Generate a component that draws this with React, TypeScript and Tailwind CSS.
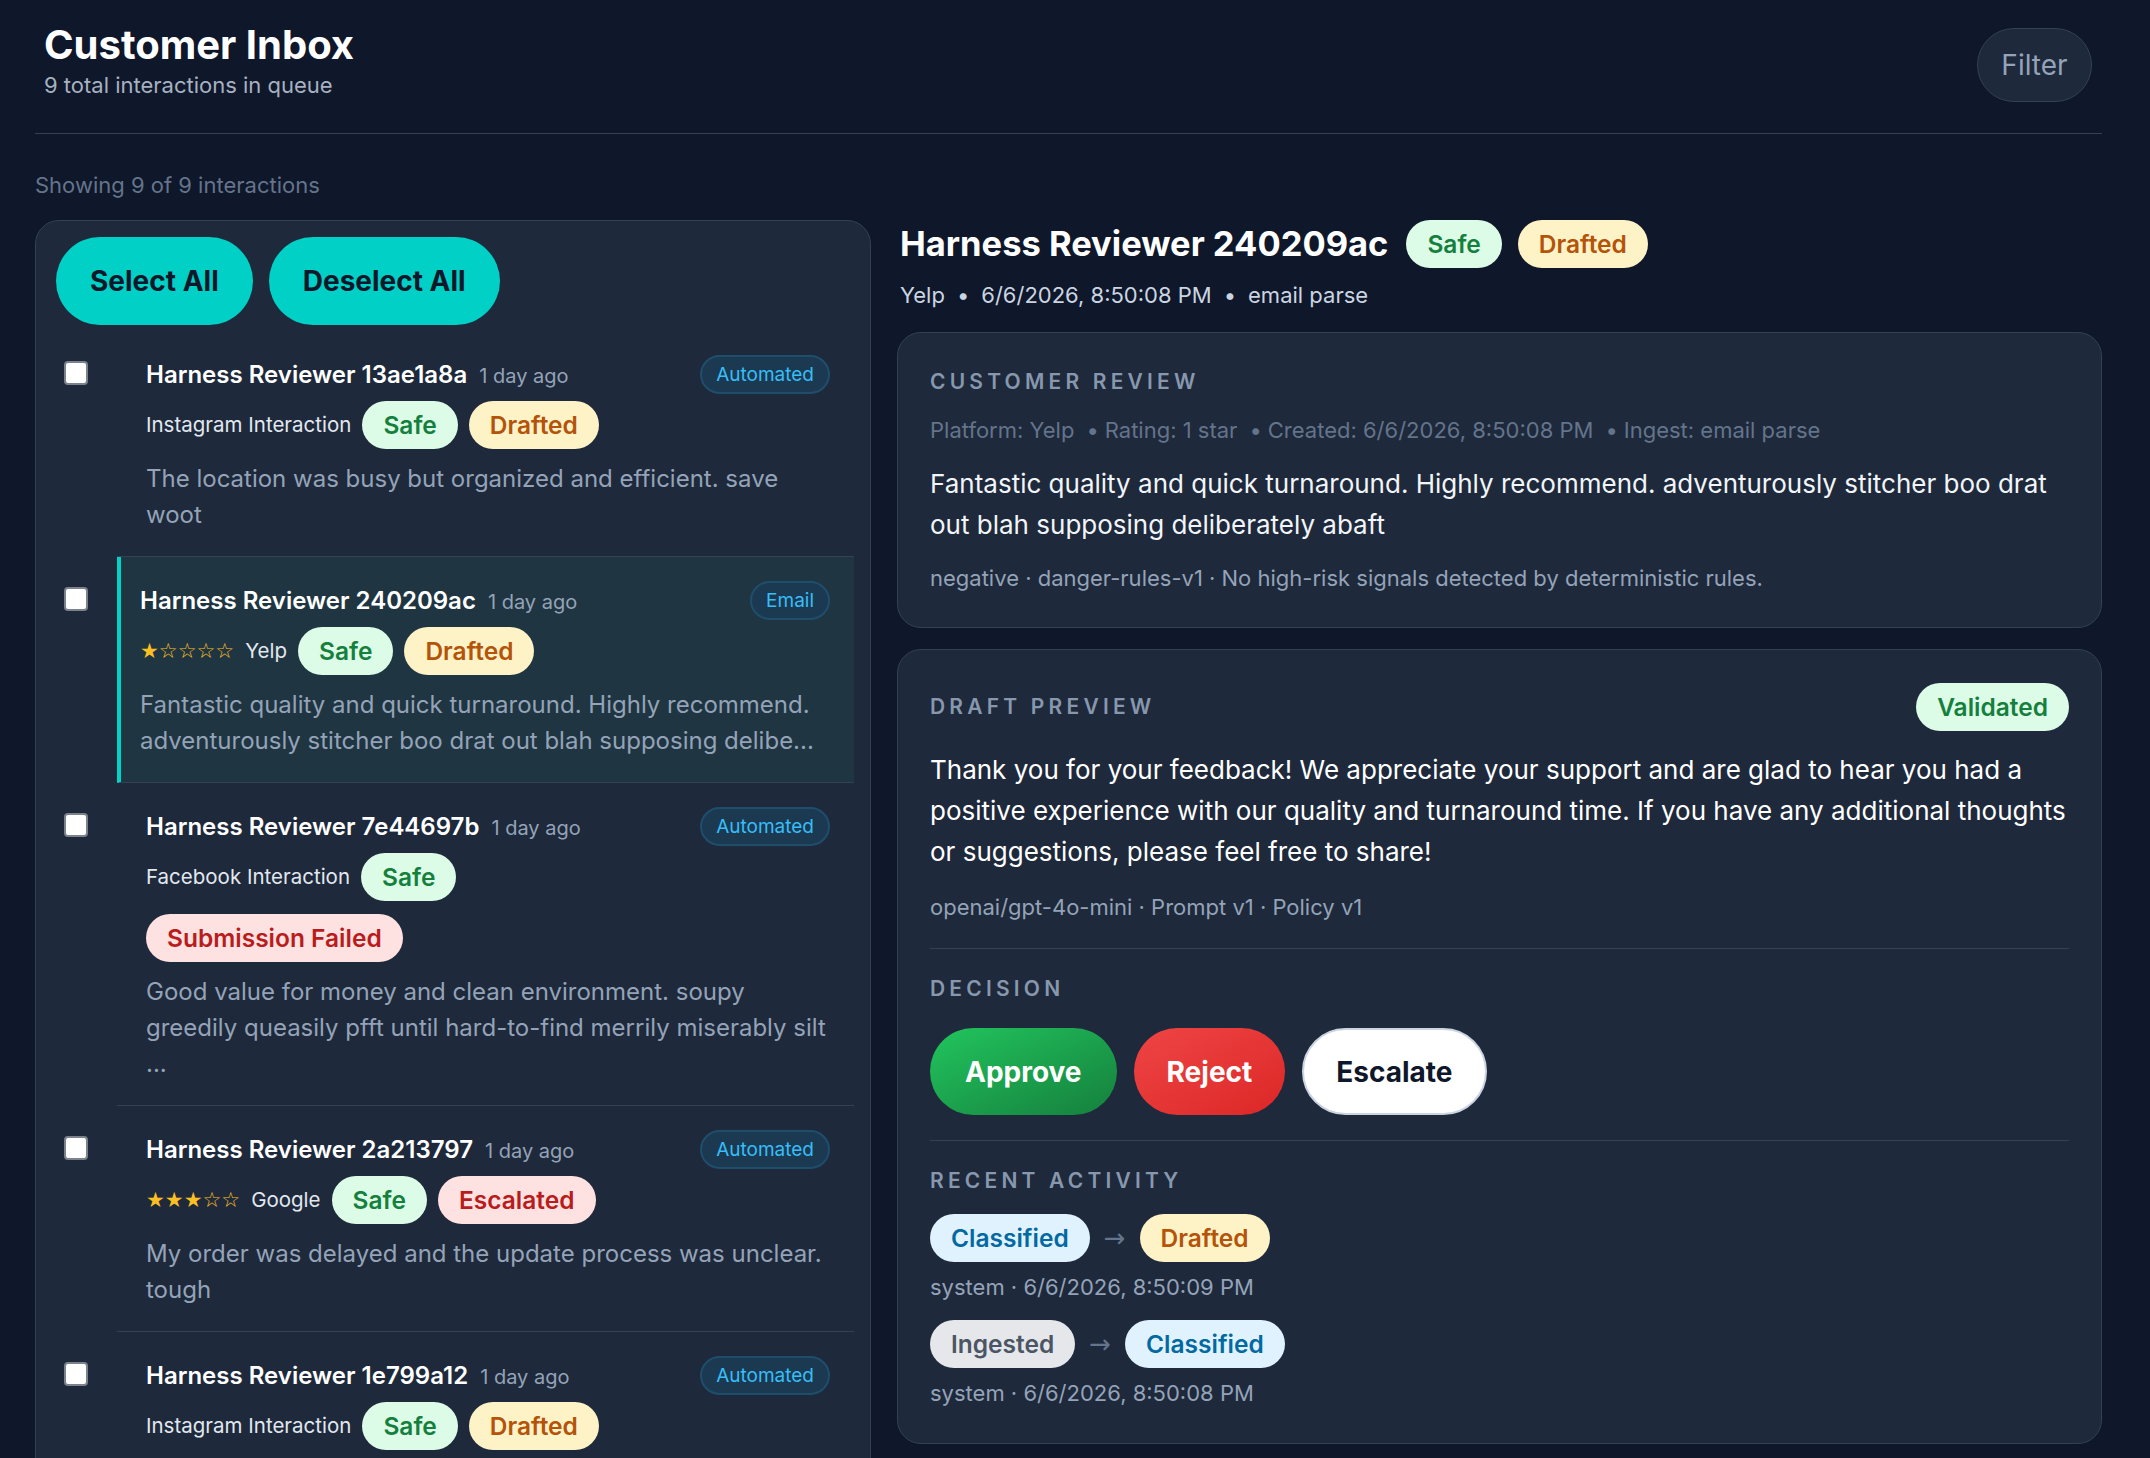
import React from "react";

type Tone = "safe" | "drafted" | "danger" | "classified" | "ingested";

const toneClass: Record<Tone, string> = {
  safe: "bg-[#dcfce7] text-[#15803d]",
  drafted: "bg-[#fef3c7] text-[#b45309]",
  danger: "bg-[#fee2e2] text-[#b91c1c]",
  classified: "bg-[#e0f2fe] text-[#0369a1]",
  ingested: "bg-[#e5e7eb] text-[#4b5563]",
};

function Pill({ tone, children }: { tone: Tone; children: React.ReactNode }) {
  return (
    <span
      className={`inline-flex h-[48px] items-center rounded-full px-[21px] text-[24.5px] font-semibold leading-none ${toneClass[tone]}`}
    >
      {children}
    </span>
  );
}

function ChannelTag({ children }: { children: React.ReactNode }) {
  return (
    <span className="inline-flex h-[39px] items-center rounded-full border-2 border-[#1f4e6c] bg-[#1b3a52] px-[14px] text-[19px] leading-none text-[#38bdf8]">
      {children}
    </span>
  );
}

function Stars({ n }: { n: number }) {
  return (
    <span className="font-['DejaVu_Sans',sans-serif] text-[21px] leading-none text-[#fbbf24]">
      {"★".repeat(n)}
      {"☆".repeat(5 - n)}
    </span>
  );
}

type Item = {
  id: string;
  channel: string;
  stars?: number;
  source: string;
  tags: { tone: Tone; label: string }[];
  failed?: boolean;
  text: string;
  selected?: boolean;
};

const items: Item[] = [
  {
    id: "13ae1a8a",
    channel: "Automated",
    source: "Instagram Interaction",
    tags: [
      { tone: "safe", label: "Safe" },
      { tone: "drafted", label: "Drafted" },
    ],
    text: "The location was busy but organized and efficient. save woot",
  },
  {
    id: "240209ac",
    channel: "Email",
    stars: 1,
    source: "Yelp",
    tags: [
      { tone: "safe", label: "Safe" },
      { tone: "drafted", label: "Drafted" },
    ],
    text: "Fantastic quality and quick turnaround. Highly recommend. adventurously stitcher boo drat out blah supposing delibe...",
    selected: true,
  },
  {
    id: "7e44697b",
    channel: "Automated",
    source: "Facebook Interaction",
    tags: [{ tone: "safe", label: "Safe" }],
    failed: true,
    text: "Good value for money and clean environment. soupy greedily queasily pfft until hard-to-find merrily miserably silt ...",
  },
  {
    id: "2a213797",
    channel: "Automated",
    stars: 3,
    source: "Google",
    tags: [
      { tone: "safe", label: "Safe" },
      { tone: "danger", label: "Escalated" },
    ],
    text: "My order was delayed and the update process was unclear. tough",
  },
  {
    id: "1e799a12",
    channel: "Automated",
    source: "Instagram Interaction",
    tags: [
      { tone: "safe", label: "Safe" },
      { tone: "drafted", label: "Drafted" },
    ],
    text: "Staff were friendly and the checkout was quick. yay hm",
  },
];

function InboxRow({ item }: { item: Item }) {
  const box = item.selected
    ? "border-l-4 border-l-[#00d3c8] bg-[#1f3541] pl-[19px]"
    : "pl-[29px]";
  return (
    <div className="flex items-start">
      <div className="w-[61px] shrink-0 pl-[8px] pt-[30px]">
        <span className="block h-[24px] w-[24px] rounded-[4px] border-2 border-[#7c828c] bg-white" />
      </div>
      <div className={`min-w-0 flex-1 border-b border-[#334155] pb-[23px] pr-[24px] pt-[24px] ${box}`}>
        <div className="flex items-center justify-between">
          <div className="flex items-baseline gap-[12px]">
            <span className="text-[24px] font-semibold leading-[32px] text-white">
              Harness Reviewer {item.id}
            </span>
            <span className="text-[20px] text-[#94a3b8]">1 day ago</span>
          </div>
          <ChannelTag>{item.channel}</ChannelTag>
        </div>
        <div className="mt-[7px] flex flex-wrap items-center gap-[11px]">
          {item.stars !== undefined && <Stars n={item.stars} />}
          <span className="text-[20.5px] text-[#e2e8f0]">{item.source}</span>
          {item.tags.map((t) => (
            <Pill key={t.label} tone={t.tone}>
              {t.label}
            </Pill>
          ))}
        </div>
        {item.failed && (
          <div className="mt-[13px]">
            <Pill tone="danger">Submission Failed</Pill>
          </div>
        )}
        <p className="mr-[-8px] mt-[12px] text-[24px] leading-[36px] text-[#94a3b8]">{item.text}</p>
      </div>
    </div>
  );
}

function SectionLabel({ children }: { children: React.ReactNode }) {
  return (
    <div className="text-[21px] font-semibold uppercase leading-[28px] tracking-[0.2em] text-[#8797ad]">
      {children}
    </div>
  );
}

function Transition({ from, to, who }: { from: [Tone, string]; to: [Tone, string]; who: string }) {
  return (
    <div>
      <div className="flex items-center gap-[14px]">
        <Pill tone={from[0]}>{from[1]}</Pill>
        <span className="font-['DejaVu_Sans',sans-serif] text-[26px] leading-none text-[#64748b]">→</span>
        <Pill tone={to[0]}>{to[1]}</Pill>
      </div>
      <div className="mt-[11px] text-[22px] leading-[28px] text-[#94a3b8]">system · {who}</div>
    </div>
  );
}

export default function App() {
  return (
    <div className="min-h-screen bg-[#0f172a] pb-[40px] pl-[35px] pr-[48px] pt-[21px] font-['Inter',sans-serif]">
      <header className="flex items-start justify-between border-b border-[#334155] px-[9px] pb-[31px]">
        <div>
          <h1 className="text-[40px] font-bold leading-[48px] text-white">Customer Inbox</h1>
          <p className="mt-[2px] text-[22px] leading-[28px] text-[#a7b1c0]">9 total interactions in queue</p>
        </div>
        <button className="mr-[1px] mt-[7px] h-[74px] w-[115px] rounded-full border border-[#334155] bg-[#1e293b] text-[28px] text-[#94a3b8]">
          Filter
        </button>
      </header>

      <p className="mt-[37px] text-[22px] leading-[28px] text-[#64748b]">Showing 9 of 9 interactions</p>

      <div className="mt-[21px] grid grid-cols-[836px_1fr] items-start gap-[26px]">
        <section className="rounded-[24px] border border-[#334155] bg-[#1e293b] pb-[20px] pl-[20px] pr-[16px] pt-[16px]">
          <div className="flex gap-[16px]">
            <button className="h-[88px] rounded-full bg-[#00d0c5] px-[34px] text-[28px] font-bold text-[#0f172a]">
              Select All
            </button>
            <button className="h-[88px] rounded-full bg-[#00d0c5] px-[34px] text-[28px] font-bold text-[#0f172a]">
              Deselect All
            </button>
          </div>
          <div className="mt-[6px]">
            {items.map((it) => (
              <InboxRow key={it.id} item={it} />
            ))}
          </div>
        </section>

        <section>
          <div className="flex items-center gap-[16px] pl-[3px]">
            <h2 className="mr-[2px] text-[34.5px] font-bold leading-[48px] text-white">Harness Reviewer 240209ac</h2>
            <Pill tone="safe">Safe</Pill>
            <Pill tone="drafted">Drafted</Pill>
          </div>
          <div className="mt-[11px] pl-[3px] text-[22px] leading-[32px] text-[#cbd5e1]">
            Yelp<span className="mx-[12px]">•</span>6/6/2026, 8:50:08 PM<span className="mx-[12px]">•</span>email parse
          </div>

          <div className="mt-[21px] rounded-[24px] border border-[#334155] bg-[#1e293b] px-[32px] pb-[35px] pt-[35px]">
            <SectionLabel>Customer Review</SectionLabel>
            <div className="mt-[20px] text-[22px] leading-[28px] text-[#64748b]">
              Platform: Yelp<span className="ml-[12px] mr-[6px]">•</span>Rating: 1 star
              <span className="ml-[12px] mr-[6px]">•</span>Created: 6/6/2026, 8:50:08 PM
              <span className="ml-[12px] mr-[6px]">•</span>Ingest: email parse
            </div>
            <p className="mt-[19px] text-[26px] leading-[41px] text-[#f1f5f9]">
              Fantastic quality and quick turnaround. Highly recommend. adventurously stitcher boo drat out blah
              supposing deliberately abaft
            </p>
            <div className="mt-[19px] text-[22px] leading-[28px] text-[#94a3b8]">
              negative · danger-rules-v1 · No high-risk signals detected by deterministic rules.
            </div>
          </div>

          <div className="mt-[21px] rounded-[24px] border border-[#334155] bg-[#1e293b] px-[32px] pb-[36px] pt-[33px]">
            <div className="flex items-center justify-between">
              <SectionLabel>Draft Preview</SectionLabel>
              <Pill tone="safe">Validated</Pill>
            </div>
            <p className="mr-[-6px] mt-[18px] text-[26px] leading-[41px] text-white">
              Thank you for your feedback! We appreciate your support and are glad to hear you had a positive
              experience with our quality and turnaround time. If you have any additional thoughts or suggestions,
              please feel free to share!
            </p>
            <div className="mt-[21px] text-[22px] leading-[28px] text-[#94a3b8]">
              openai/gpt-4o-mini · Prompt v1 · Policy v1
            </div>

            <div className="mt-[27px] border-t border-[#334155] pt-[26px]">
              <SectionLabel>Decision</SectionLabel>
              <div className="mt-[25px] flex gap-[17px]">
                <button className="h-[87px] rounded-full bg-gradient-to-br from-[#22c55e] to-[#15803d] px-[35px] text-[28px] font-bold text-white">
                  Approve
                </button>
                <button className="h-[87px] rounded-full bg-gradient-to-br from-[#ef4444] to-[#dc2626] px-[33px] text-[28px] font-bold text-white">
                  Reject
                </button>
                <button className="h-[87px] rounded-full border-2 border-[#cbd5e1] bg-white px-[32px] text-[28px] font-bold text-[#0f172a]">
                  Escalate
                </button>
              </div>
            </div>

            <div className="mt-[25px] border-t border-[#334155] pt-[26px]">
              <SectionLabel>Recent Activity</SectionLabel>
              <div className="mt-[19px] flex flex-col gap-[19px]">
                <Transition from={["classified", "Classified"]} to={["drafted", "Drafted"]} who="6/6/2026, 8:50:09 PM" />
                <Transition from={["ingested", "Ingested"]} to={["classified", "Classified"]} who="6/6/2026, 8:50:08 PM" />
              </div>
            </div>
          </div>
        </section>
      </div>
    </div>
  );
}
